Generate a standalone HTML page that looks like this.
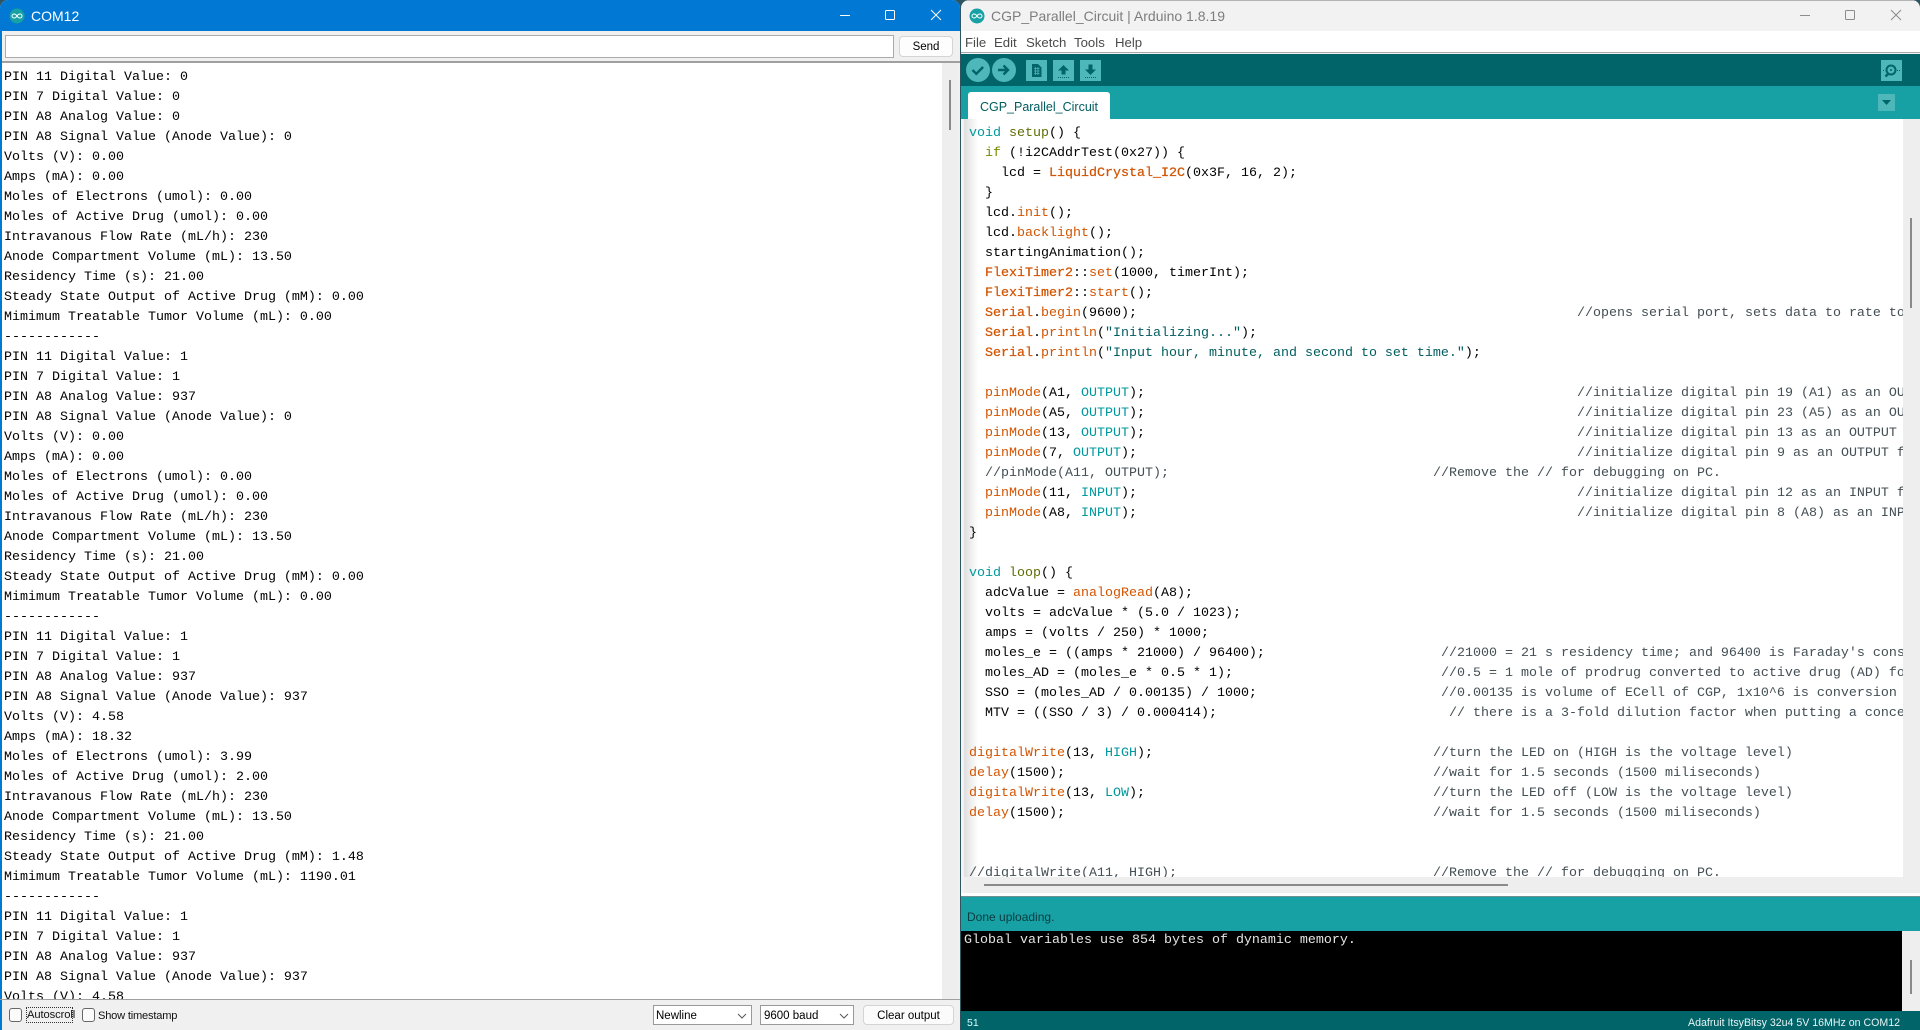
<!DOCTYPE html>
<html lang="en">
<head>
<meta charset="utf-8">
<title>COM12 and Arduino</title>
<style>
html,body{margin:0;padding:0;width:1920px;height:1030px;overflow:hidden;background:#2f5560;}
*{box-sizing:border-box;}
.a{position:absolute;}
.s{font-family:"Liberation Sans",sans-serif;white-space:nowrap;}
.m{font-family:"Liberation Mono",monospace;font-size:13.33px;line-height:20px;white-space:pre;}
.code{white-space:normal;}
.code div{height:20px;position:relative;white-space:pre;}
.k{color:#00979c}.f{color:#d35400}.t{color:#5e6d03}.q{color:#728e00}.b{color:#d35400;-webkit-text-stroke:.25px #d35400}.w{color:#005c5f}
.c{color:#434f54}
.c1,.c2,.c3,.c4{color:#434f54;position:absolute;top:0}
.c1{left:608px}.c2{left:464px}.c3{left:472px}.c4{left:480px}
</style>
</head>
<body>
<!-- LEFT WINDOW: serial monitor -->
<div class="a" style="left:0;top:0;width:960px;height:1030px;background:#f0f0f0;border-radius:8px 8px 0 0;overflow:hidden">
  <div class="a" style="left:0;top:0;width:960px;height:31px;background:#0078d4"></div>
  <div class="a s" style="left:31px;top:7px;font-size:14px;line-height:18px;color:#fff">COM12</div>
  <div class="a" style="left:5px;top:35px;width:889px;height:23px;background:#fff;border:1px solid #ababab"></div>
  <div class="a s" style="left:899px;top:36px;width:54px;height:21px;background:#fdfdfd;border:1px solid #d4d4d4;border-radius:4px;font-size:11.5px;line-height:20px;text-align:center;color:#000">Send</div>
  <div class="a" style="left:0;top:61px;width:960px;height:2px;background:#a0a0a0"></div>
  <div class="a" style="left:2px;top:63px;width:940px;height:936px;background:#fff;overflow:hidden">
    <div class="a m" style="left:2px;top:5px;color:#000">PIN 11 Digital Value: 0
PIN 7 Digital Value: 0
PIN A8 Analog Value: 0
PIN A8 Signal Value (Anode Value): 0
Volts (V): 0.00
Amps (mA): 0.00
Moles of Electrons (umol): 0.00
Moles of Active Drug (umol): 0.00
Intravanous Flow Rate (mL/h): 230
Anode Compartment Volume (mL): 13.50
Residency Time (s): 21.00
Steady State Output of Active Drug (mM): 0.00
Mimimum Treatable Tumor Volume (mL): 0.00
------------
PIN 11 Digital Value: 1
PIN 7 Digital Value: 1
PIN A8 Analog Value: 937
PIN A8 Signal Value (Anode Value): 0
Volts (V): 0.00
Amps (mA): 0.00
Moles of Electrons (umol): 0.00
Moles of Active Drug (umol): 0.00
Intravanous Flow Rate (mL/h): 230
Anode Compartment Volume (mL): 13.50
Residency Time (s): 21.00
Steady State Output of Active Drug (mM): 0.00
Mimimum Treatable Tumor Volume (mL): 0.00
------------
PIN 11 Digital Value: 1
PIN 7 Digital Value: 1
PIN A8 Analog Value: 937
PIN A8 Signal Value (Anode Value): 937
Volts (V): 4.58
Amps (mA): 18.32
Moles of Electrons (umol): 3.99
Moles of Active Drug (umol): 2.00
Intravanous Flow Rate (mL/h): 230
Anode Compartment Volume (mL): 13.50
Residency Time (s): 21.00
Steady State Output of Active Drug (mM): 1.48
Mimimum Treatable Tumor Volume (mL): 1190.01
------------
PIN 11 Digital Value: 1
PIN 7 Digital Value: 1
PIN A8 Analog Value: 937
PIN A8 Signal Value (Anode Value): 937
Volts (V): 4.58</div>
  </div>
  <div class="a" style="left:942px;top:63px;width:16px;height:936px;background:#eee"></div>
  <div class="a" style="left:949px;top:80px;width:2px;height:50px;background:#8a8a8a"></div>
  <div class="a" style="left:0;top:31px;width:2px;height:999px;background:#0078d4"></div>
  <div class="a" style="left:0;top:999px;width:960px;height:1px;background:#a0a0a0"></div>
  <div class="a" style="left:9px;top:1008px;width:13px;height:14px;background:#fbfbfb;border:1px solid #666;border-radius:3px"></div>
  <div class="a s" style="left:26px;top:1007px;width:47px;height:16px;border:1px dotted #333;font-size:11.2px;line-height:15px;color:#111;letter-spacing:-.1px">Autoscroll</div>
  <div class="a" style="left:82px;top:1008px;width:13px;height:14px;background:#fbfbfb;border:1px solid #666;border-radius:3px"></div>
  <div class="a s" style="left:98px;top:1008px;font-size:11.1px;line-height:16px;color:#111;letter-spacing:-.2px">Show timestamp</div>
  <div class="a s" style="left:653px;top:1005px;width:99px;height:20px;background:#fff;border:1px solid #999;padding-left:2px;font-size:11.5px;line-height:20px;color:#000">Newline</div>
  <div class="a s" style="left:760px;top:1005px;width:94px;height:20px;background:#fff;border:1px solid #999;padding-left:3px;font-size:11.5px;line-height:20px;color:#000">9600 baud</div>
  <div class="a s" style="left:863px;top:1005px;width:91px;height:20px;background:#fbfbfb;border:1px solid #d4d4d4;border-radius:4px;font-size:11.5px;line-height:20px;text-align:center;color:#000">Clear output</div>
</div>

<!-- RIGHT WINDOW: Arduino IDE -->
<div class="a" style="left:961px;top:0;width:959px;height:1030px;background:#f2f2f2;border-radius:8px 8px 0 0;overflow:hidden">
  <div class="a" style="left:0;top:0;width:959px;height:1px;background:#b4b4b4"></div>
  <div class="a s" style="left:30px;top:7px;font-size:14px;line-height:18px;color:#7d7d7d">CGP_Parallel_Circuit | Arduino 1.8.19</div>
  <div class="a" style="left:0;top:31px;width:959px;height:21px;background:#fff"></div>
  <div class="a s" style="left:4px;top:34px;font-size:13.2px;line-height:17px;color:#4a4a4a">File</div>
  <div class="a s" style="left:33px;top:34px;font-size:13.2px;line-height:17px;color:#4a4a4a">Edit</div>
  <div class="a s" style="left:65px;top:34px;font-size:13.2px;line-height:17px;color:#4a4a4a">Sketch</div>
  <div class="a s" style="left:113px;top:34px;font-size:13.2px;line-height:17px;color:#4a4a4a">Tools</div>
  <div class="a s" style="left:154px;top:34px;font-size:13.2px;line-height:17px;color:#4a4a4a">Help</div>
  <div class="a" style="left:0;top:52px;width:959px;height:1px;background:#a8a8a8"></div>
  <div class="a" style="left:0;top:54px;width:959px;height:32px;background:#006468"></div>
  <div class="a" style="left:0;top:86px;width:959px;height:33px;background:#17a1a5"></div>
  <div class="a s" style="left:7px;top:92px;width:142px;height:27px;background:#fff;border-radius:3px 3px 0 0;font-size:12.5px;line-height:31px;text-align:center;color:#005c5f">CGP_Parallel_Circuit</div>

  <!-- editor -->
  <div class="a" style="left:3px;top:119px;width:939px;height:758px;background:#fff;overflow:hidden">
    <div class="a" style="left:0;top:0;width:14px;height:758px;background:linear-gradient(to right,#dedede,#fff)"></div>
    <div class="a m code" style="left:5px;top:5px;width:934px;color:#000">
<div><span class="k">void</span> <span class="t">setup</span>() {</div>
<div>  <span class="q">if</span> (!i2CAddrTest(0x27)) {</div>
<div>    lcd = <span class="b">LiquidCrystal_I2C</span>(0x3F, 16, 2);</div>
<div>  }</div>
<div>  lcd.<span class="f">init</span>();</div>
<div>  lcd.<span class="f">backlight</span>();</div>
<div>  startingAnimation();</div>
<div>  <span class="b">FlexiTimer2</span>::<span class="f">set</span>(1000, timerInt);</div>
<div>  <span class="b">FlexiTimer2</span>::<span class="f">start</span>();</div>
<div>  <span class="b">Serial</span>.<span class="f">begin</span>(9600);<span class="c1">//opens serial port, sets data to rate to 9600 bps</span></div>
<div>  <span class="b">Serial</span>.<span class="f">println</span>(<span class="w">"Initializing..."</span>);</div>
<div>  <span class="b">Serial</span>.<span class="f">println</span>(<span class="w">"Input hour, minute, and second to set time."</span>);</div>
<div></div>
<div>  <span class="f">pinMode</span>(A1, <span class="k">OUTPUT</span>);<span class="c1">//initialize digital pin 19 (A1) as an OUTPUT for the LED</span></div>
<div>  <span class="f">pinMode</span>(A5, <span class="k">OUTPUT</span>);<span class="c1">//initialize digital pin 23 (A5) as an OUTPUT for the LED</span></div>
<div>  <span class="f">pinMode</span>(13, <span class="k">OUTPUT</span>);<span class="c1">//initialize digital pin 13 as an OUTPUT for the LED</span></div>
<div>  <span class="f">pinMode</span>(7, <span class="k">OUTPUT</span>);<span class="c1">//initialize digital pin 9 as an OUTPUT for the LED</span></div>
<div>  <span class="c">//pinMode(A11, OUTPUT);</span><span class="c2">//Remove the // for debugging on PC.</span></div>
<div>  <span class="f">pinMode</span>(11, <span class="k">INPUT</span>);<span class="c1">//initialize digital pin 12 as an INPUT for the signal</span></div>
<div>  <span class="f">pinMode</span>(A8, <span class="k">INPUT</span>);<span class="c1">//initialize digital pin 8 (A8) as an INPUT for the signal</span></div>
<div>}</div>
<div></div>
<div><span class="k">void</span> <span class="t">loop</span>() {</div>
<div>  adcValue = <span class="f">analogRead</span>(A8);</div>
<div>  volts = adcValue * (5.0 / 1023);</div>
<div>  amps = (volts / 250) * 1000;</div>
<div>  moles_e = ((amps * 21000) / 96400);<span class="c3">//21000 = 21 s residency time; and 96400 is Faraday's constant</span></div>
<div>  moles_AD = (moles_e * 0.5 * 1);<span class="c3">//0.5 = 1 mole of prodrug converted to active drug (AD) for 2 moles</span></div>
<div>  SSO = (moles_AD / 0.00135) / 1000;<span class="c3">//0.00135 is volume of ECell of CGP, 1x10^6 is conversion factor</span></div>
<div>  MTV = ((SSO / 3) / 0.000414);<span class="c4">// there is a 3-fold dilution factor when putting a concentration</span></div>
<div></div>
<div><span class="f">digitalWrite</span>(13, <span class="k">HIGH</span>);<span class="c2">//turn the LED on (HIGH is the voltage level)</span></div>
<div><span class="f">delay</span>(1500);<span class="c2">//wait for 1.5 seconds (1500 miliseconds)</span></div>
<div><span class="f">digitalWrite</span>(13, <span class="k">LOW</span>);<span class="c2">//turn the LED off (LOW is the voltage level)</span></div>
<div><span class="f">delay</span>(1500);<span class="c2">//wait for 1.5 seconds (1500 miliseconds)</span></div>
<div></div>
<div></div>
<div><span class="c">//digitalWrite(A11, HIGH);</span><span class="c2">//Remove the // for debugging on PC.</span></div>
    </div>
  </div>
  <div class="a" style="left:942px;top:119px;width:17px;height:775px;background:#eee"></div>
  <div class="a" style="left:949px;top:218px;width:2px;height:90px;background:#8a8a8a"></div>
  <div class="a" style="left:3px;top:877px;width:939px;height:16px;background:#eee"></div>
  <div class="a" style="left:23px;top:884px;width:524px;height:2px;background:#8a8a8a"></div>
  <div class="a" style="left:0;top:893px;width:959px;height:3px;background:#fff"></div>
  <div class="a" style="left:0;top:896px;width:959px;height:1px;background:#6f8f90"></div>

  <!-- console -->
  <div class="a" style="left:0;top:897px;width:959px;height:34px;background:#17a1a5"></div>
  <div class="a s" style="left:6px;top:910px;font-size:12px;line-height:15px;color:#0a3c3e">Done uploading.</div>
  <div class="a" style="left:0;top:931px;width:941px;height:80px;background:#000"></div>
  <div class="a m" style="left:3px;top:931px;color:#e4e4e4">Global variables use 854 bytes of dynamic memory.</div>
  <div class="a" style="left:941px;top:931px;width:18px;height:80px;background:#eee"></div>
  <div class="a" style="left:949px;top:960px;width:2px;height:34px;background:#8a8a8a"></div>
  <div class="a" style="left:0;top:1011px;width:959px;height:19px;background:#006468"></div>
  <div class="a s" style="left:6px;top:1016px;font-size:10.5px;line-height:14px;color:#dff">51</div>
  <div class="a s" style="right:20px;top:1016px;font-size:10.6px;line-height:14px;color:#e6f4f4">Adafruit ItsyBitsy 32u4 5V 16MHz on COM12</div>
</div>

<!-- Icon layer -->
<svg class="a" style="left:0;top:0;pointer-events:none" width="1920" height="1030" viewBox="0 0 1920 1030" fill="none">
  <!-- logos -->
  <circle cx="17" cy="16" r="7.5" fill="#17a1a5"/>
  <path d="M17 16c-1-1.600-2-2-3-2s-2 .9-2 2 1 2 2 2 2-.4 3-2c1-1.600 2-2 3-2s2 .9 2 2-1 2-2 2-2-.4-3-2z" stroke="#fff" stroke-width="1"/>
  <circle cx="977" cy="16" r="7.5" fill="#17a1a5"/>
  <path d="M977 16c-1-1.600-2-2-3-2s-2 .9-2 2 1 2 2 2 2-.4 3-2c1-1.600 2-2 3-2s2 .9 2 2-1 2-2 2-2-.4-3-2z" stroke="#fff" stroke-width="1"/>
  <!-- left window buttons -->
  <path d="M840 15.500h10" stroke="#fff"/>
  <rect x="885.500" y="10.500" width="9" height="9" stroke="#fff" rx="1"/>
  <path d="M931 10l10 10M941 10l-10 10" stroke="#fff"/>
  <!-- right window buttons -->
  <path d="M1800 15.500h10" stroke="#8c8c8c"/>
  <rect x="1845.500" y="10.500" width="9" height="9" stroke="#8c8c8c" rx="1"/>
  <path d="M1891 10l10 10M1901 10l-10 10" stroke="#8c8c8c"/>
  <!-- select chevrons -->
  <path d="M738 1014l4 4 4-4" stroke="#555"/>
  <path d="M840 1014l4 4 4-4" stroke="#555"/>
  <!-- toolbar -->
  <circle cx="978" cy="70" r="12" fill="#4db7ba"/>
  <path d="M972.500 70l3.800 3.800 6.800-6.800" stroke="#006468" stroke-width="2.400"/>
  <circle cx="1004" cy="70" r="12" fill="#4db7ba"/>
  <path d="M998 70h9M1003.500 65.500l4.500 4.500-4.500 4.500" stroke="#006468" stroke-width="2.400"/>
  <rect x="1026" y="60" width="21" height="21" fill="#4db7ba"/>
  <path d="M1032 64h6l3.500 3.500V77H1032z" fill="#006468"/>
  <path d="M1034 68.500h5.500M1034 71h5.500M1034 73.500h5.500M1035.500 67v8M1038 67v8" stroke="#4db7ba" stroke-width=".8"/>
  <rect x="1053" y="60" width="21" height="21" fill="#4db7ba"/>
  <path d="M1058 70.500l5.500-5.500 5.500 5.500h-3.500v4h-4v-4z" fill="#006468"/>
  <path d="M1058 77.500h11" stroke="#006468" stroke-dasharray="1 1"/>
  <rect x="1080" y="60" width="21" height="21" fill="#4db7ba"/>
  <path d="M1085 69.500l5.500 5.500 5.500-5.500h-3.500v-5h-4v5z" fill="#006468"/>
  <path d="M1085 77.500h11" stroke="#006468" stroke-dasharray="1 1"/>
  <rect x="1881" y="60" width="21" height="21" fill="#4db7ba"/>
  <circle cx="1891" cy="70" r="4.500" stroke="#006468" stroke-width="2"/>
  <circle cx="1891" cy="70" r="1" fill="#006468"/>
  <path d="M1888 74l-2.500 2.500" stroke="#006468" stroke-width="2.400"/>
  <path d="M1897 70.500h4M1884 70.500h-1" stroke="#006468" stroke-dasharray="1 1"/>
  <rect x="1878" y="94" width="17" height="17" fill="#4db7ba"/>
  <path d="M1882 100h9l-4.500 5z" fill="#006468"/>
</svg>
</body>
</html>
